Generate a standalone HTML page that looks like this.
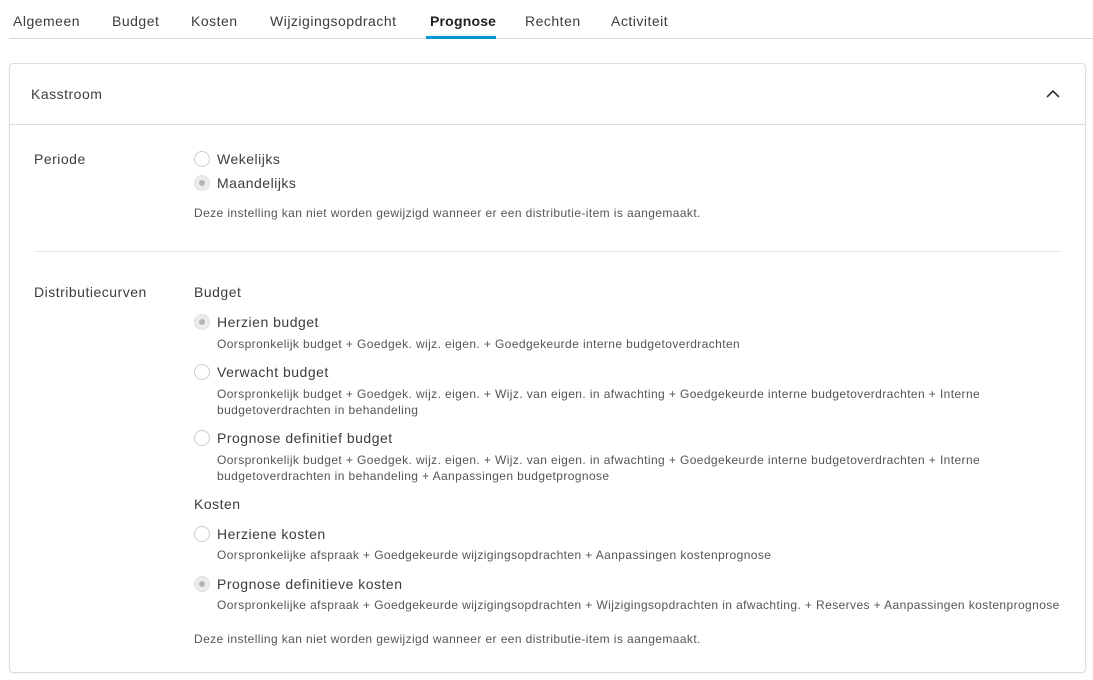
<!DOCTYPE html>
<html><head><meta charset="utf-8"><style>
body{margin:0;width:1093px;height:680px;background:#fff;font-family:"Liberation Sans",sans-serif;color:#3c3c3c;position:relative;overflow:hidden}
.a{position:absolute;white-space:nowrap}
.tab{font-size:14px;top:13px;color:#3c3c3c;letter-spacing:0.5px}
.l{font-size:14px;color:#3c3c3c;letter-spacing:0.5px}
.d{font-size:12px;color:#555;letter-spacing:0.4px}
.r{position:absolute;left:194px;width:14px;height:14px;border:1px solid #ccc;border-radius:50%;background:#fff}
.r.s{background:#ececec;border-color:#e0e0e0}
.r.s::after{content:"";position:absolute;left:4px;top:4px;width:6px;height:6px;border-radius:50%;background:#b5b5b5}
</style></head><body>
<div class="a tab" style="left:13px">Algemeen</div>
<div class="a tab" style="left:112px">Budget</div>
<div class="a tab" style="left:191px">Kosten</div>
<div class="a tab" style="left:270px">Wijzigingsopdracht</div>
<div class="a tab" style="left:430px;font-weight:bold;color:#222;letter-spacing:0.2px">Prognose</div>
<div class="a tab" style="left:525px">Rechten</div>
<div class="a tab" style="left:611px">Activiteit</div>
<div class="a" style="left:9px;top:38px;width:1084px;height:1px;background:#d9d9d9"></div>
<div class="a" style="left:426px;top:36px;width:70px;height:3px;background:#0696d7"></div>

<div class="a" style="left:9px;top:63px;width:1075px;height:608px;border:1px solid #ddd;border-radius:4px;box-shadow:0 1px 2px rgba(0,0,0,.05)"></div>
<div class="a" style="left:10px;top:124px;width:1075px;height:1px;background:#ddd"></div>
<div class="a l" style="left:31px;top:86px">Kasstroom</div>
<svg class="a" style="left:1045px;top:88px" width="16" height="12"><path d="M2 9 L8 3 L14 9" fill="none" stroke="#333" stroke-width="1.6"/></svg>

<div class="a l" style="left:34px;top:151px">Periode</div>
<div class="r" style="top:151px"></div><div class="a l" style="left:217px;top:151px">Wekelijks</div>
<div class="r s" style="top:175px"></div><div class="a l" style="left:217px;top:175px">Maandelijks</div>
<div class="a d" style="left:194px;top:206px">Deze instelling kan niet worden gewijzigd wanneer er een distributie-item is aangemaakt.</div>
<div class="a" style="left:34px;top:251px;width:1027px;height:1px;background:#e6e6e6"></div>

<div class="a l" style="left:34px;top:284px">Distributiecurven</div>
<div class="a l" style="left:194px;top:284px">Budget</div>
<div class="r s" style="top:314px"></div><div class="a l" style="left:217px;top:314px">Herzien budget</div>
<div class="a d" style="left:217px;top:337px">Oorspronkelijk budget + Goedgek. wijz. eigen. + Goedgekeurde interne budgetoverdrachten</div>
<div class="r" style="top:364px"></div><div class="a l" style="left:217px;top:364px">Verwacht budget</div>
<div class="a d" style="left:217px;top:387px">Oorspronkelijk budget + Goedgek. wijz. eigen. + Wijz. van eigen. in afwachting + Goedgekeurde interne budgetoverdrachten + Interne</div>
<div class="a d" style="left:217px;top:403px">budgetoverdrachten in behandeling</div>
<div class="r" style="top:430px"></div><div class="a l" style="left:217px;top:430px">Prognose definitief budget</div>
<div class="a d" style="left:217px;top:453px">Oorspronkelijk budget + Goedgek. wijz. eigen. + Wijz. van eigen. in afwachting + Goedgekeurde interne budgetoverdrachten + Interne</div>
<div class="a d" style="left:217px;top:469px">budgetoverdrachten in behandeling + Aanpassingen budgetprognose</div>
<div class="a l" style="left:194px;top:496px">Kosten</div>
<div class="r" style="top:526px"></div><div class="a l" style="left:217px;top:526px">Herziene kosten</div>
<div class="a d" style="left:217px;top:548px">Oorspronkelijke afspraak + Goedgekeurde wijzigingsopdrachten + Aanpassingen kostenprognose</div>
<div class="r s" style="top:576px"></div><div class="a l" style="left:217px;top:576px">Prognose definitieve kosten</div>
<div class="a d" style="left:217px;top:598px">Oorspronkelijke afspraak + Goedgekeurde wijzigingsopdrachten + Wijzigingsopdrachten in afwachting. + Reserves + Aanpassingen kostenprognose</div>
<div class="a d" style="left:194px;top:632px">Deze instelling kan niet worden gewijzigd wanneer er een distributie-item is aangemaakt.</div>
</body></html>
